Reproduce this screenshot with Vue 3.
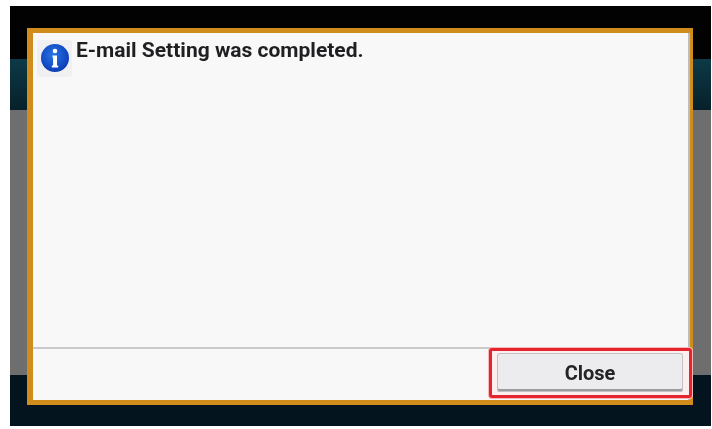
<template>
  <div class="page">
    <div class="screen">
      <div class="band-top"></div>
      <div class="band-teal"></div>
      <div class="band-gray"></div>
      <div class="band-bottom"></div>

      <div class="dialog">
        <div class="message">
          <div class="icon-box">
            <svg width="28" height="28" viewBox="0 0 28 28">
              <defs>
                <radialGradient id="blue" cx="45%" cy="40%" r="65%">
                  <stop offset="0%" stop-color="#2a76e6" />
                  <stop offset="100%" stop-color="#0838b4" />
                </radialGradient>
              </defs>
              <circle cx="14" cy="14" r="14" fill="url(#blue)" />
              <circle cx="14" cy="7" r="2.3" fill="#fff" />
              <path d="M11.5 11.5h4.5v10h1.2v2h-6.4v-2h1.3v-8h-.6z" fill="#fff" />
            </svg>
          </div>
          <p class="text">{{ message }}</p>
        </div>
        <div class="footer">
          <div class="highlight">
            <button class="close-btn">Close</button>
          </div>
        </div>
      </div>
    </div>
  </div>
</template>

<script setup>
const message = 'E-mail Setting was completed.'
</script>

<style>
html,
body {
  margin: 0;
  background: #ffffff;
}
</style>

<style scoped>
.page {
  width: 712px;
  height: 429px;
  padding: 6px 1px 3px 10px;
  box-sizing: border-box;
  overflow: hidden;
  font-family: Roboto, "Liberation Sans", sans-serif;
}

.screen {
  position: relative;
  height: 100%;
  display: flex;
  flex-direction: column;
  filter: blur(0.5px);
}

.band-top {
  height: 53px;
  background: #020203;
}

.band-teal {
  height: 51px;
  background: linear-gradient(#0c3a46, #07202a);
}

.band-gray {
  flex: 1;
  background: #6e6e6e;
}

.band-bottom {
  height: 51px;
  background: #04141e;
}

.dialog {
  position: absolute;
  left: 17px;
  top: 22px;
  width: 666px;
  height: 377px;
  box-sizing: border-box;
  border: solid #d08d1c;
  border-width: 5px 3px 5px 6px;
  background: #f8f8f9;
  display: flex;
  flex-direction: column;
  box-shadow: inset -2px 0 0 #bdbdbd;
}

.message {
  flex: 1;
  display: flex;
  align-items: flex-start;
  padding: 7px 0 0 4px;
  gap: 4px;
}

.icon-box {
  width: 35px;
  height: 37px;
  box-sizing: border-box;
  padding-top: 4px;
  display: flex;
  justify-content: center;
  background: #f0f0f2;
  border-radius: 3px;
}

.text {
  margin: -2px 0 0;
  font-size: 21px;
  font-weight: 700;
  color: #1f1f21;
  line-height: 24px;
}

.footer {
  height: 51px;
  border-top: 2px solid #c9c9cb;
  display: flex;
  justify-content: flex-end;
}

.highlight {
  margin: -1px -2px 2px 0;
  padding: 2px 6px 3px 5px;
  border: 3px solid #e5252d;
  border-radius: 3px;
  display: flex;
  background: #fbeeee;
  box-shadow: 0 0 0 1px #f6b9b9;
}

.close-btn {
  width: 186px;
  height: 39px;
  padding: 0;
  border: none;
  border-radius: 3px;
  background: #ececee;
  box-shadow: inset 0 0 0 1px #c2c2c4, inset 0 -3px 0 #9c9ca0;
  font-family: inherit;
  font-size: 20px;
  font-weight: 700;
  color: #242426;
}
</style>
